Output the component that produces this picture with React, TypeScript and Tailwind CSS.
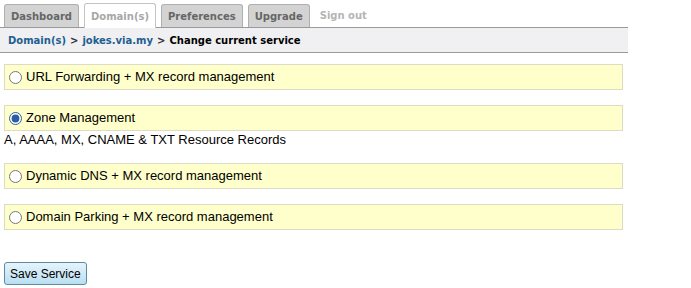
import { useState } from "react"

const tabs = [
  { label: "Dashboard", active: false },
  { label: "Domain(s)", active: true },
  { label: "Preferences", active: false },
  { label: "Upgrade", active: false },
]

const services = [
  { id: "url", label: "URL Forwarding + MX record management" },
  { id: "zone", label: "Zone Management", note: "A, AAAA, MX, CNAME & TXT Resource Records" },
  { id: "ddns", label: "Dynamic DNS + MX record management" },
  { id: "park", label: "Domain Parking + MX record management" },
]

export default function App() {
  const [selected, setSelected] = useState("zone")

  return (
    <div className="w-[691px] h-[288px] bg-white overflow-hidden">
      {/* Tabs + breadcrumb */}
      <div className="w-[628px] font-['DejaVu_Sans',sans-serif] text-[10px] font-bold">
        <div className="flex items-end gap-[5px] pl-[4px] pt-[3px] h-[28px] border-b border-[#9a9a9a]">
          {tabs.map((t) =>
            t.active ? (
              <div
                key={t.label}
                className="h-[25px] px-[6px] flex items-center bg-white border border-b-0 border-[#c4c4c4] rounded-t-[3px] text-[#a8a8a8] -mb-px"
              >
                {t.label}
              </div>
            ) : (
              <div
                key={t.label}
                className="h-[23px] px-[6px] flex items-center bg-[#d3d3d3] border border-b-0 border-[#b0b0b0] rounded-t-[3px] text-[#666]"
              >
                {t.label}
              </div>
            )
          )}
          <div className="h-[23px] px-[5px] flex items-center text-[#b5b5b5]">Sign out</div>
        </div>
        <div className="h-[25px] flex items-center px-[8px] bg-[#f0f0f2] border-b border-[#9a9a9a]">
          <span className="text-[#1d5f8f]">Domain(s)</span>
          <span className="text-[#333] mx-[4px]">&gt;</span>
          <span className="text-[#1d5f8f]">jokes.via.my</span>
          <span className="text-[#333] mx-[4px]">&gt;</span>
          <span className="text-black">Change current service</span>
        </div>
      </div>

      {/* Service options */}
      <div className="pl-[4px] pt-[11px] font-['Liberation_Sans',Arial,sans-serif] text-[13px] text-black">
        {services.map((s) => (
          <div key={s.id} className="mb-[15px]">
            <label className="w-[619px] h-[26px] flex items-center gap-[4px] px-[4px] bg-[#ffffcc] border border-[#dcdcc4] cursor-pointer">
              <input
                type="radio"
                name="service"
                checked={selected === s.id}
                onChange={() => setSelected(s.id)}
                className="w-[13px] h-[13px] m-0 accent-[#2b5e9c]"
              />
              <span>{s.label}</span>
            </label>
            {s.note && <div className="leading-[15px] pt-[1px] pb-[1px]">{s.note}</div>}
          </div>
        ))}

        <button className="mt-[17px] h-[23px] px-[5px] font-['Liberation_Sans',Arial,sans-serif] text-[12px] text-black bg-gradient-to-b from-[#e6f4fb] to-[#b9dff2] border border-[#5c8aa5] rounded-[3px]">
          Save Service
        </button>
      </div>
    </div>
  )
}
